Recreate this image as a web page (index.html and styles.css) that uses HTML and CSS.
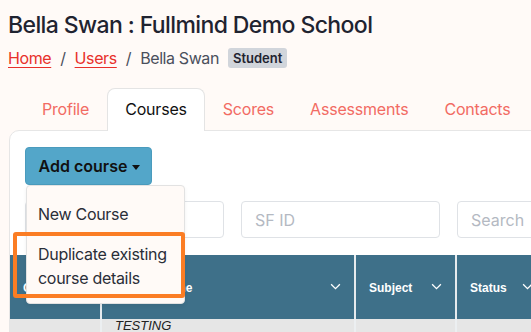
FILE: index.html
```html
<!DOCTYPE html>
<html lang="en">
<head>
    <meta charset="UTF-8" />
    <meta name="viewport" content="width=device-width, initial-scale=1.0" />
    <title>Bella Swan : Fullmind Demo School</title>
    <link rel="stylesheet" href="styles.css">
</head>
<body>
    <h1 class="page-title">Bella Swan : Fullmind Demo School</h1>
    <nav class="breadcrumb">
        <a href="#">Home</a>
        <span class="sep">/</span>
        <a href="#">Users</a>
        <span class="sep">/</span>
        <span class="current">Bella Swan</span>
        <span class="badge">Student</span>
    </nav>

    <ul class="tabs">
        <li><a href="#">Profile</a></li>
        <li class="active"><a href="#">Courses</a></li>
        <li><a href="#">Scores</a></li>
        <li><a href="#">Assessments</a></li>
        <li><a href="#">Contacts</a></li>
    </ul>

    <div class="card">
        <div class="dropdown">
            <button class="btn-add">Add course <span class="caret"></span></button>
            <div class="dropdown-menu">
                <a href="#" class="dropdown-item">New Course</a>
                <a href="#" class="dropdown-item">Duplicate existing course details</a>
            </div>
            <div class="highlight"></div>
        </div>

        <div class="filters">
            <input type="text" placeholder="Name" />
            <input type="text" placeholder="SF ID" />
            <input type="text" placeholder="Search" />
        </div>

        <table class="courses">
            <thead>
                <tr>
                    <th class="col-code"><span>Code</span></th>
                    <th class="col-name"><span>Course Name</span><svg viewBox="0 0 12 8"><path d="M1 1.5l5 5 5-5" /></svg></th>
                    <th class="col-subject"><span>Subject</span><svg viewBox="0 0 12 8"><path d="M1 1.5l5 5 5-5" /></svg></th>
                    <th class="col-status"><span>Status</span><svg viewBox="0 0 12 8"><path d="M1 1.5l5 5 5-5" /></svg></th>
                </tr>
            </thead>
            <tbody>
                <tr>
                    <td></td>
                    <td><em>TESTING</em></td>
                    <td></td>
                    <td></td>
                </tr>
            </tbody>
        </table>
    </div>
</body>
</html>
```

FILE: styles.css
```css
html, body {
    overflow: hidden;
}
body {
    font-family: "Inter", "Noto Sans", sans-serif;
    background: #fffaf7;
    color: #1f2330;
    margin: 0;
    padding: 0;
    width: 600px;
    height: 332px;
}
.page-title {
    font-size: 23px;
    font-weight: 500;
    letter-spacing: -0.6px;
    margin: 0;
    padding: 11px 8px 0;
    line-height: 28px;
}
.breadcrumb {
    display: flex;
    align-items: center;
    padding: 0 8px;
    margin-top: 8px;
    font-size: 16px;
    line-height: 22px;
    color: #4a4f5c;
    letter-spacing: -0.4px;
}
.breadcrumb a {
    color: #e8302a;
    text-decoration: underline;
    text-underline-offset: 3px;
}
.breadcrumb .sep {
    margin: 0 9px;
}
.badge {
    background: #d1d5db;
    color: #1f2330;
    font-size: 13px;
    font-weight: 600;
    letter-spacing: 0;
    border-radius: 3px;
    padding: 0 5px;
    line-height: 20px;
    margin-left: 9px;
}
.tabs {
    list-style: none;
    display: flex;
    margin: 19px 0 0;
    padding: 0 0 0 24px;
    position: relative;
    z-index: 1;
}
.tabs li a {
    display: block;
    padding: 0 17px;
    height: 41px;
    line-height: 40px;
    font-size: 16px;
    letter-spacing: -0.2px;
    color: #f26b63;
    text-decoration: none;
    border: 1px solid transparent;
    border-bottom: none;
    border-radius: 8px 8px 0 0;
}
.tabs li.active a {
    background: #fff;
    color: #111;
    border-color: #e4e4e4;
    height: 42px;
}
.card {
    background: #fff;
    border: 1px solid #e6e6e6;
    border-radius: 10px 0 0 0;
    margin: -1px 0 0 9px;
    padding: 16px 15px 0;
    height: 300px;
}
.dropdown {
    position: relative;
}
.btn-add {
    font-family: inherit;
    font-size: 16px;
    font-weight: 600;
    color: #111;
    background: #53a6c9;
    border: 1px solid #4a9bbd;
    border-radius: 4px;
    width: 127px;
    height: 38px;
    padding: 0 0 0 2px;
    cursor: pointer;
}
.caret {
    display: inline-block;
    border-top: 5px solid #111;
    border-left: 4px solid transparent;
    border-right: 4px solid transparent;
    vertical-align: middle;
    margin-left: 1px;
}
.dropdown-menu {
    position: absolute;
    top: 38px;
    left: 1px;
    width: 157px;
    background: #fffaf7;
    border: 1px solid #e2e2e2;
    border-radius: 4px;
    padding: 8px 0 5px;
    z-index: 5;
    box-shadow: 0 2px 4px rgba(0, 0, 0, 0.06);
}
.dropdown-item {
    display: block;
    padding: 8px 4px 8px 11px;
    font-size: 16px;
    line-height: 24px;
    letter-spacing: -0.3px;
    color: #2a2e38;
    text-decoration: none;
}
.highlight {
    position: absolute;
    top: 85px;
    left: -12px;
    width: 164px;
    height: 58px;
    border: 4px solid #fb7d24;
    border-radius: 3px;
    z-index: 6;
}
.filters {
    display: flex;
    gap: 17px;
    margin-top: 16px;
}
.filters input {
    flex: none;
    width: 199px;
    height: 37px;
    box-sizing: border-box;
    border: 1px solid #dfe2e6;
    border-radius: 4px;
    padding: 0 13px;
    font-family: inherit;
    font-size: 16px;
}
.filters input::placeholder {
    color: #b4b9c2;
}
.courses {
    margin: 17px -15px 0;
    border-collapse: collapse;
    font-family: "Liberation Sans", Arial, sans-serif;
}
.courses th {
    background: #3e7089;
    color: #fff;
    height: 64px;
    padding: 0 0 0 13px;
    font-size: 12px;
    font-weight: bold;
    text-align: left;
    border-left: 2px solid #e6ebee;
    box-sizing: border-box;
}
.courses th:first-child {
    border-left: none;
}
.courses th span {
    vertical-align: middle;
}
.courses th svg {
    width: 11px;
    height: 7px;
    float: right;
    margin: 3px 13px 0 0;
    fill: none;
    stroke: #fff;
    stroke-width: 1.5;
}
.col-code { width: 91px; }
.col-name { width: 254px; }
.col-subject { width: 101px; }
.col-status { width: 90px; }
.courses td {
    background: #e6e6e6;
    height: 14px;
    border-left: 2px solid #eceff1;
    padding: 0 0 0 13px;
    font-size: 13px;
    color: #222;
    line-height: 14px;
    vertical-align: top;
}
.courses td:first-child {
    border-left: none;
}
```
